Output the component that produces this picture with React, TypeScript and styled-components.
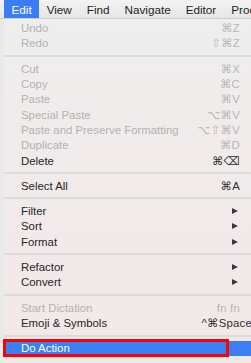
import styled, { createGlobalStyle } from "styled-components";

const GlobalStyle = createGlobalStyle`
  html, body {
    margin: 0;
    padding: 0;
    background: #ececec;
  }
  body {
    font-family: 'Liberation Sans', 'DejaVu Sans', sans-serif;
    overflow: hidden;
  }
`

const Screen = styled.div`
  width: 251px;
  height: 363px;
  overflow: hidden;
  display: flex;
  flex-direction: column;
  background: #e9e9e9;
`

const MenuBar = styled.nav`
  height: 18px;
  flex-shrink: 0;
  display: flex;
  align-items: stretch;
  padding-left: 4px;
  background: linear-gradient(180deg, #f3f3f3 0%, #e6e6e6 100%);
  border-bottom: 1px solid #cfcfcf;
  white-space: nowrap;
`

const BarItem = styled.div<{ $active?: boolean }>`
  display: flex;
  align-items: center;
  padding: 0 7.5px;
  font-size: 11.7px;
  color: ${(p) => (p.$active ? "#ffffff" : "#1e1e1e")};
  background: ${(p) => (p.$active ? "#3a7cf4" : "transparent")};
`

const Panel = styled.div`
  margin-left: 4px;
  flex: 1;
  display: flex;
  flex-direction: column;
  padding-top: 1.5px;
  background: linear-gradient(180deg, #eeeeee 0%, #f1ebeb 35%, #f2e8e8 100%);
`

const Row = styled.div<{ $disabled?: boolean; $selected?: boolean }>`
  position: relative;
  height: 15.3px;
  flex-shrink: 0;
  display: flex;
  align-items: center;
  padding: 0 11px 0 17px;
  font-size: 11.4px;
  white-space: nowrap;
  color: ${(p) => (p.$selected ? "#ffffff" : p.$disabled ? "#b4b1b1" : "#262626")};
  background: ${(p) => (p.$selected ? "#3b7ff5" : "transparent")};
`

const Label = styled.span`
  flex: 1;
`

const Shortcut = styled.span<{ $bleed?: boolean; $disabled?: boolean }>`
  font-size: 11.4px;
  color: ${(p) => (p.$disabled ? "#b8b5b5" : "#2e2e2e")};
  margin-right: ${(p) => (p.$bleed ? "-12px" : "0")};
  letter-spacing: 0.2px;
`

const Arrow = styled.span`
  width: 0;
  height: 0;
  margin-right: 2px;
  border-left: 6px solid #3a3a3a;
  border-top: 3.5px solid transparent;
  border-bottom: 3.5px solid transparent;
`

const Separator = styled.div`
  height: 10px;
  flex-shrink: 0;
  display: flex;
  align-items: center;
  &::after {
    content: "";
    flex: 1;
    height: 2px;
    background: #dedada;
  }
`

const Callout = styled.div`
  position: absolute;
  left: -1px;
  top: -1.5px;
  width: 226px;
  height: 18px;
  box-sizing: border-box;
  border: 3.5px solid #ff0000;
`

const Footer = styled.div`
  flex: 1;
  background: #efe9e9;
`

type Item = {
  label: string;
  keys?: string;
  disabled?: boolean;
  submenu?: boolean;
  bleed?: boolean;
};

const groups: Item[][] = [
  [
    { label: "Undo", keys: "⌘Z", disabled: true },
    { label: "Redo", keys: "⇧⌘Z", disabled: true },
  ],
  [
    { label: "Cut", keys: "⌘X", disabled: true },
    { label: "Copy", keys: "⌘C", disabled: true },
    { label: "Paste", keys: "⌘V", disabled: true },
    { label: "Special Paste", keys: "⌥⌘V", disabled: true },
    { label: "Paste and Preserve Formatting", keys: "⌥⇧⌘V", disabled: true },
    { label: "Duplicate", keys: "⌘D", disabled: true },
    { label: "Delete", keys: "⌘⌫" },
  ],
  [{ label: "Select All", keys: "⌘A" }],
  [
    { label: "Filter", submenu: true },
    { label: "Sort", submenu: true },
    { label: "Format", submenu: true },
  ],
  [
    { label: "Refactor", submenu: true },
    { label: "Convert", submenu: true },
  ],
  [
    { label: "Start Dictation", keys: "fn fn", disabled: true },
    { label: "Emoji & Symbols", keys: "^⌘Space", bleed: true },
  ],
];

const barItems = ["Edit", "View", "Find", "Navigate", "Editor", "Product"];

function App() {
  return (
    <Screen>
      <GlobalStyle />
      <MenuBar>
        {barItems.map((name, i) => (
          <BarItem key={name} $active={i === 0}>
            {name}
          </BarItem>
        ))}
      </MenuBar>
      <Panel>
        {groups.map((group, gi) => (
          <div key={gi} style={{ display: "contents" }}>
            {group.map((item) => (
              <Row key={item.label} $disabled={item.disabled}>
                <Label>{item.label}</Label>
                {item.keys && (
                  <Shortcut $disabled={item.disabled} $bleed={item.bleed}>
                    {item.keys}
                  </Shortcut>
                )}
                {item.submenu && <Arrow />}
              </Row>
            ))}
            <Separator />
          </div>
        ))}
        <Row $selected>
          <Label>Do Action</Label>
          <Callout />
        </Row>
        <Footer />
      </Panel>
    </Screen>
  );
}

export default App;
